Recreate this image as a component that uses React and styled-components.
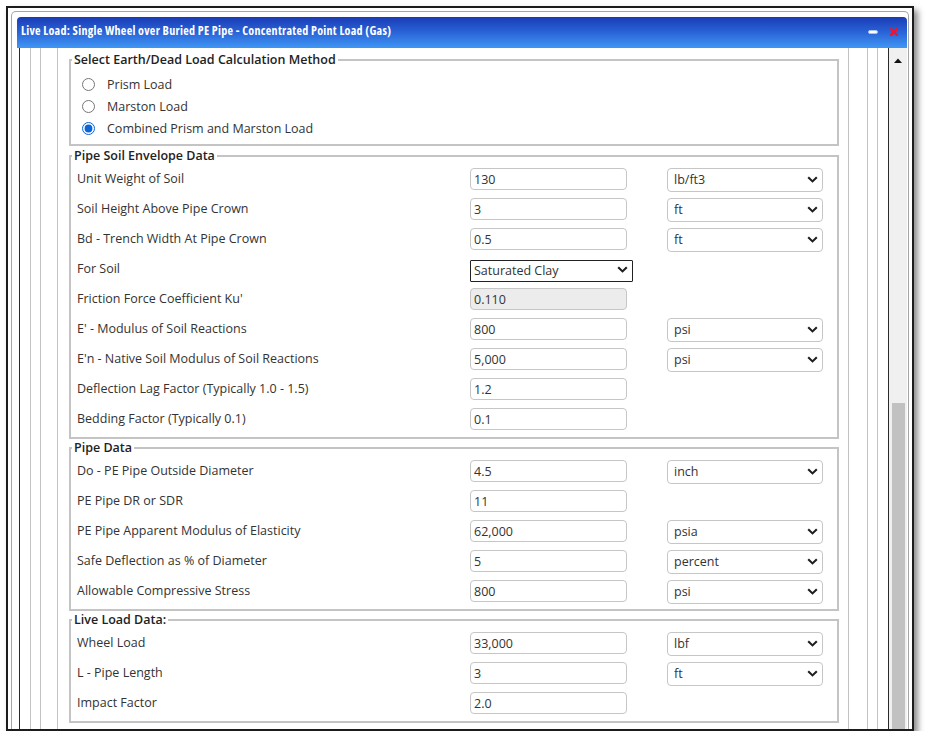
import React from "react";
import styled, { createGlobalStyle } from "styled-components";

const GlobalStyle = createGlobalStyle`
  html, body {
    margin: 0;
    background: #fff;
  }
  body {
    font-family: "Open Sans", "Liberation Sans", sans-serif;
    color: #333;
  }
`;

const Frame = styled.div`
  box-sizing: border-box;
  margin: 6px 0 0 6px;
  width: 908px;
  height: 725px;
  border: 2px solid #1c1c1c;
  box-shadow: 4px 4px 6px rgba(0, 0, 0, 0.45);
  padding: 3px 3px 0 3px;
  display: flex;
  overflow: hidden;
  background: #fff;
`;

const Window = styled.div`
  flex: 1;
  display: flex;
  flex-direction: column;
  min-height: 0;
  border: 1px solid #a5a5a5;
  border-bottom: none;
  border-radius: 5px 5px 0 0;
  padding: 5px 1px 0 5px;
`;

const TitleBar = styled.div`
  box-sizing: border-box;
  height: 31px;
  flex: none;
  display: flex;
  align-items: center;
  padding: 0 9px 4px 4px;
  border-radius: 4px 4px 0 0;
  background: linear-gradient(#1a3bb5 0%, #2a64d8 50%, #3f97f4 100%);
`;

const Title = styled.div`
  flex: 1;
  color: #fff;
  font-size: 12px;
  font-weight: 700;
  font-stretch: 75%;
  letter-spacing: 0.3px;
  white-space: nowrap;
`;

const TitleButtons = styled.div`
  display: flex;
  align-items: center;
  gap: 12px;
  padding-top: 2px;
`;

const Body = styled.div`
  flex: 1;
  display: flex;
  min-height: 0;
`;

const Viewport = styled.div`
  flex: 1;
  display: flex;
  min-width: 0;
  margin-left: 2px;
  border-left: 1px solid #2a2a2a;
  overflow: hidden;
`;

const Pane = styled.div`
  flex: 1;
  display: flex;
  min-width: 0;
  margin: 0 ${(p) => p.$right}px 0 ${(p) => p.$left}px;
  border-left: 1px solid #c3c3c3;
  border-right: 1px solid #c3c3c3;
`;

const Stack = styled.div`
  flex: 1;
  display: flex;
  flex-direction: column;
  padding: 4px 9px 0 11px;
`;

const Group = styled.fieldset`
  margin: 0 0 ${(p) => (p.$radios ? "2px" : "1px")};
  min-inline-size: 0;
  border: 2px solid #c4c4c4;
  padding: ${(p) => (p.$radios ? "5px 14px 5px 5px" : "0 14px 3px 6px")};
`;

const Legend = styled.legend`
  margin-left: ${(p) => (p.$radios ? "-4px" : "-5px")};
  padding: 0 2px;
  font-size: 12.5px;
  line-height: 16px;
  font-weight: 600;
  color: #222;
`;

const RadioRow = styled.label`
  display: flex;
  align-items: center;
  height: 22px;
  padding-left: 6px;
  font-size: 12.5px;
  color: #333;
`;

const Radio = styled.input`
  margin: 0 12px 0 0;
  width: 13px;
  height: 13px;
  accent-color: #0a66d8;
`;

const Row = styled.div`
  display: grid;
  grid-template-columns: 393px 157px 40px 156px;
  align-items: center;
  height: 30px;
`;

const Label = styled.span`
  font-size: 12.5px;
  color: #333;
  margin-top: -2px;
  white-space: nowrap;
`;

const TextInput = styled.input`
  box-sizing: border-box;
  width: 157px;
  height: 22px;
  border: 1px solid #c6c6c6;
  border-radius: 4px;
  padding: 0 3px;
  font-family: inherit;
  font-size: 12.5px;
  color: #333;
  background: ${(p) => (p.disabled ? "#ececec" : "#fff")};
  outline: none;
`;

const SelectWrap = styled.div`
  position: relative;
  grid-column: ${(p) => (p.$wide ? "2 / span 2" : "4")};
  width: ${(p) => (p.$wide ? "163px" : "156px")};
  height: ${(p) => (p.$wide ? "22px" : "24px")};
`;

const SelectBox = styled.select`
  appearance: none;
  box-sizing: border-box;
  width: 100%;
  height: 100%;
  border: 1px solid ${(p) => (p.$dark ? "#222" : "#c6c6c6")};
  border-radius: ${(p) => (p.$dark ? "1px" : "4px")};
  padding: 0 ${(p) => (p.$dark ? "3px" : "6px")};
  font-family: inherit;
  font-size: 12.5px;
  color: #333;
  background: #fff;
  outline: none;
`;

const Chevron = styled.svg`
  position: absolute;
  right: 5px;
  top: 50%;
  margin-top: -3px;
  pointer-events: none;
`;

const Scrollbar = styled.div`
  width: 18px;
  flex: none;
  display: flex;
  flex-direction: column;
  justify-content: space-between;
  border-left: 1px solid #2a2a2a;
  background: #f0f0f0;
`;

const ArrowButton = styled.div`
  height: 17px;
  display: flex;
  align-items: center;
  justify-content: center;
  padding-top: 4px;
`;

const Thumb = styled.div`
  margin: 0 2px 0 3px;
  height: ${(p) => p.$height}px;
  background: #c1c1c1;
`;

const ChevronIcon = () => (
  <Chevron width="11" height="7" viewBox="0 0 11 7">
    <path d="M1.2 1.2 L5.5 5.4 L9.8 1.2" fill="none" stroke="#1e1e1e" strokeWidth="2.1" />
  </Chevron>
);

const Unit = ({ value }) => (
  <SelectWrap>
    <SelectBox defaultValue={value}>
      <option>{value}</option>
    </SelectBox>
    <ChevronIcon />
  </SelectWrap>
);

const Field = ({ label, value, unit, disabled }) => (
  <Row>
    <Label>{label}</Label>
    <TextInput defaultValue={value} disabled={disabled} />
    {unit && <Unit value={unit} />}
  </Row>
);

const soilRows = [
  ["Unit Weight of Soil", "130", "lb/ft3"],
  ["Soil Height Above Pipe Crown", "3", "ft"],
  ["Bd - Trench Width At Pipe Crown", "0.5", "ft"],
];

const soilRowsAfter = [
  ["E' - Modulus of Soil Reactions", "800", "psi"],
  ["E'n - Native Soil Modulus of Soil Reactions", "5,000", "psi"],
  ["Deflection Lag Factor (Typically 1.0 - 1.5)", "1.2"],
  ["Bedding Factor (Typically 0.1)", "0.1"],
];

const pipeRows = [
  ["Do - PE Pipe Outside Diameter", "4.5", "inch"],
  ["PE Pipe DR or SDR", "11"],
  ["PE Pipe Apparent Modulus of Elasticity", "62,000", "psia"],
  ["Safe Deflection as % of Diameter", "5", "percent"],
  ["Allowable Compressive Stress", "800", "psi"],
];

const liveRows = [
  ["Wheel Load", "33,000", "lbf"],
  ["L - Pipe Length", "3", "ft"],
  ["Impact Factor", "2.0"],
];

const methods = ["Prism Load", "Marston Load", "Combined Prism and Marston Load"];

const renderRows = (rows) =>
  rows.map(([label, value, unit]) => <Field key={label} label={label} value={value} unit={unit} />);

export default function App() {
  return (
    <>
      <GlobalStyle />
      <Frame>
        <Window>
          <TitleBar>
            <Title>Live Load: Single Wheel over Buried PE Pipe - Concentrated Point Load (Gas)</Title>
            <TitleButtons>
              <svg width="10" height="4" viewBox="0 0 10 4">
                <rect x="0.5" y="0.5" width="9" height="3" rx="1.5" fill="#fff" stroke="#a9c2ec" />
              </svg>
              <svg width="8" height="8" viewBox="0 0 8 8">
                <path d="M1.1 1.1 L6.9 6.9 M6.9 1.1 L1.1 6.9" stroke="#f2122c" strokeWidth="2.3" strokeLinecap="round" />
              </svg>
            </TitleButtons>
          </TitleBar>
          <Body>
            <Viewport>
              <Pane $left={10} $right={10}>
                <Pane $left={9} $right={9}>
                  <Pane $left={16} $right={18}>
                    <Stack>
                      <Group $radios>
                        <Legend $radios>Select Earth/Dead Load Calculation Method</Legend>
                        {methods.map((m, i) => (
                          <RadioRow key={m}>
                            <Radio type="radio" name="method" defaultChecked={i === 2} />
                            {m}
                          </RadioRow>
                        ))}
                      </Group>

                      <Group>
                        <Legend>Pipe Soil Envelope Data</Legend>
                        {renderRows(soilRows)}
                        <Row>
                          <Label>For Soil</Label>
                          <SelectWrap $wide>
                            <SelectBox $dark defaultValue="Saturated Clay">
                              <option>Saturated Clay</option>
                            </SelectBox>
                            <ChevronIcon />
                          </SelectWrap>
                        </Row>
                        <Field label="Friction Force Coefficient Ku'" value="0.110" disabled />
                        {renderRows(soilRowsAfter)}
                      </Group>

                      <Group>
                        <Legend>Pipe Data</Legend>
                        {renderRows(pipeRows)}
                      </Group>

                      <Group>
                        <Legend>Live Load Data:</Legend>
                        {renderRows(liveRows)}
                      </Group>
                    </Stack>
                  </Pane>
                </Pane>
              </Pane>
            </Viewport>
            <Scrollbar>
              <ArrowButton>
                <svg width="8" height="5" viewBox="0 0 8 5">
                  <path d="M0 5 L4 0.5 L8 5 Z" fill="#111" />
                </svg>
              </ArrowButton>
              <Thumb $height={326} />
            </Scrollbar>
          </Body>
        </Window>
      </Frame>
    </>
  );
}
